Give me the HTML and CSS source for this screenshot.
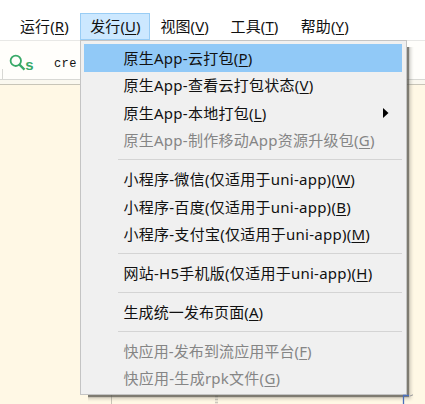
FILE: index.html
```html
<!DOCTYPE html>
<html lang="zh-CN">
<head>
<meta charset="utf-8">
<title>发行</title>
<link rel="stylesheet" href="styles.css">
</head>
<body>
<nav class="menubar">
  <span class="tab">运行(<u>R</u>)</span>
  <span class="tab active">发行(<u>U</u>)</span>
  <span class="tab">视图(<u>V</u>)</span>
  <span class="tab">工具(<u>T</u>)</span>
  <span class="tab">帮助(<u>Y</u>)</span>
</nav>
<div class="toolbar">
  <svg class="search" width="26" height="20" viewBox="0 0 26 20">
    <circle cx="6.8" cy="6.8" r="5.2" fill="none" stroke="#38a968" stroke-width="1.8"/>
    <path d="M10.5 10.6L15.5 15.6" stroke="#38a968" stroke-width="2.2"/>
    <text x="16.2" y="15.8" class="s">s</text>
  </svg>
  <span class="query">cre</span>
</div>
<main class="editor"><i class="rule"></i><i class="dots"></i>
  <svg class="mark" width="14" height="10" viewBox="0 0 14 10"><path d="M1.5 10V1.5H7" fill="none" stroke="#4a70bd" stroke-width="1.3"/><path d="M8 2L11 .8" stroke="#999"/></svg>
</main>
<div class="menu">
  <div class="item selected"><span>原生App-云打包(<u>P</u>)</span></div>
  <div class="item"><span>原生App-查看云打包状态(<u>V</u>)</span></div>
  <div class="item"><span>原生App-本地打包(<u>L</u>)</span><svg class="arrow" width="6" height="10" viewBox="0 0 6 10"><path d="M0 0L5.5 5L0 10Z"/></svg></div>
  <div class="item disabled"><span>原生App-制作移动App资源升级包(<u>G</u>)</span></div>
  <div class="sep"></div>
  <div class="item"><span>小程序-微信(仅适用于uni-app)(<u>W</u>)</span></div>
  <div class="item"><span>小程序-百度(仅适用于uni-app)(<u>B</u>)</span></div>
  <div class="item"><span>小程序-支付宝(仅适用于uni-app)(<u>M</u>)</span></div>
  <div class="sep"></div>
  <div class="item"><span>网站-H5手机版(仅适用于uni-app)(<u>H</u>)</span></div>
  <div class="sep"></div>
  <div class="item plain"><span>生成统一发布页面(<u>A</u>)</span></div>
  <div class="sep"></div>
  <div class="item disabled plain"><span>快应用-发布到流应用平台(<u>F</u>)</span></div>
  <div class="item disabled"><span>快应用-生成rpk文件(<u>G</u>)</span></div>
</div>
</body>
</html>
```
FILE: styles.css
```css
* { box-sizing: border-box; }
body {
  margin: 0;
  width: 425px;
  height: 404px;
  overflow: hidden;
  display: flex;
  flex-direction: column;
  background: #fff;
  color: #111;
  font: 15px/20px "Noto Sans", "Noto Sans CJK SC", sans-serif;
}
u { text-decoration: underline; text-decoration-thickness: 1px; text-underline-offset: 2px; }
.menubar {
  height: 40px;
  flex: none;
  display: flex;
  padding: 13px 0 0 10px;
}
.tab {
  width: 70.2px;
  height: 27px;
  padding-left: 10px;
  line-height: 27px;
  white-space: nowrap;
  letter-spacing: .1px;
}
.tab.active { background: #cce8ff; border: 1px solid #99cdf5; padding-left: 9px; line-height: 25px; }
.toolbar {
  height: 45px;
  flex: none;
  display: flex;
  border-top: 1px solid #e8e8e6;
  border-bottom: 1px solid #c8c5b8;
  box-shadow: inset 0 -4px #faf8ef, inset 0 -5px #d8d8d4;
  background: linear-gradient(#d8d8d4, #d8d8d4) 2px 28px / 1px 11px no-repeat #fffefb;
  padding: 13px 0 0 9px;
}
.s { font: bold 15px "Liberation Sans", sans-serif; fill: #38a968; }
.query { margin-left: 19px; font: 12px/20px "Liberation Mono", monospace; letter-spacing: .4px; }
.editor {
  flex: 1;
  background: #fff8e5;
  display: flex;
  align-items: flex-end;
}
.rule { margin-left: 111px; width: 1px; height: 14px; background: #c8c4b6; }
.dots { margin-left: 103px; width: 3px; height: 14px; background: repeating-linear-gradient(#ccc8bc 0 1px, #eee8da 1px 3px); }
.mark { margin-left: 184px; position: relative; z-index: 1; }
.menu {
  position: absolute;
  left: 80px;
  top: 40px;
  width: 327px;
  height: 355px;
  padding: 3px 4px 0 3px;
  background: #f0f0f0;
  border: 1px solid #c4c4c4;
  box-shadow: 2px 2px 1px rgba(80, 78, 70, .65), 4px 4px 3px rgba(80, 78, 70, .25);
  clip-path: polygon(0 0, 100% 0, 100% 7px, 340px 7px, 340px 370px, 8px 370px, 8px 100%, 0 100%);
}
.item { display: flex; align-items: center; height: 27.5px; padding-left: 39.5px; white-space: nowrap; letter-spacing: .26px; }
.item.plain { letter-spacing: .1px; }
.item.selected { background: #91c9f7; }
.item.disabled { color: #858585; }
.arrow { margin-left: auto; margin-right: 13px; }
.sep { height: 11.4px; margin-left: 34px; padding-top: 5px; }
.sep::before { content: ""; display: block; height: 1px; background: #d4d4d4; }
```
